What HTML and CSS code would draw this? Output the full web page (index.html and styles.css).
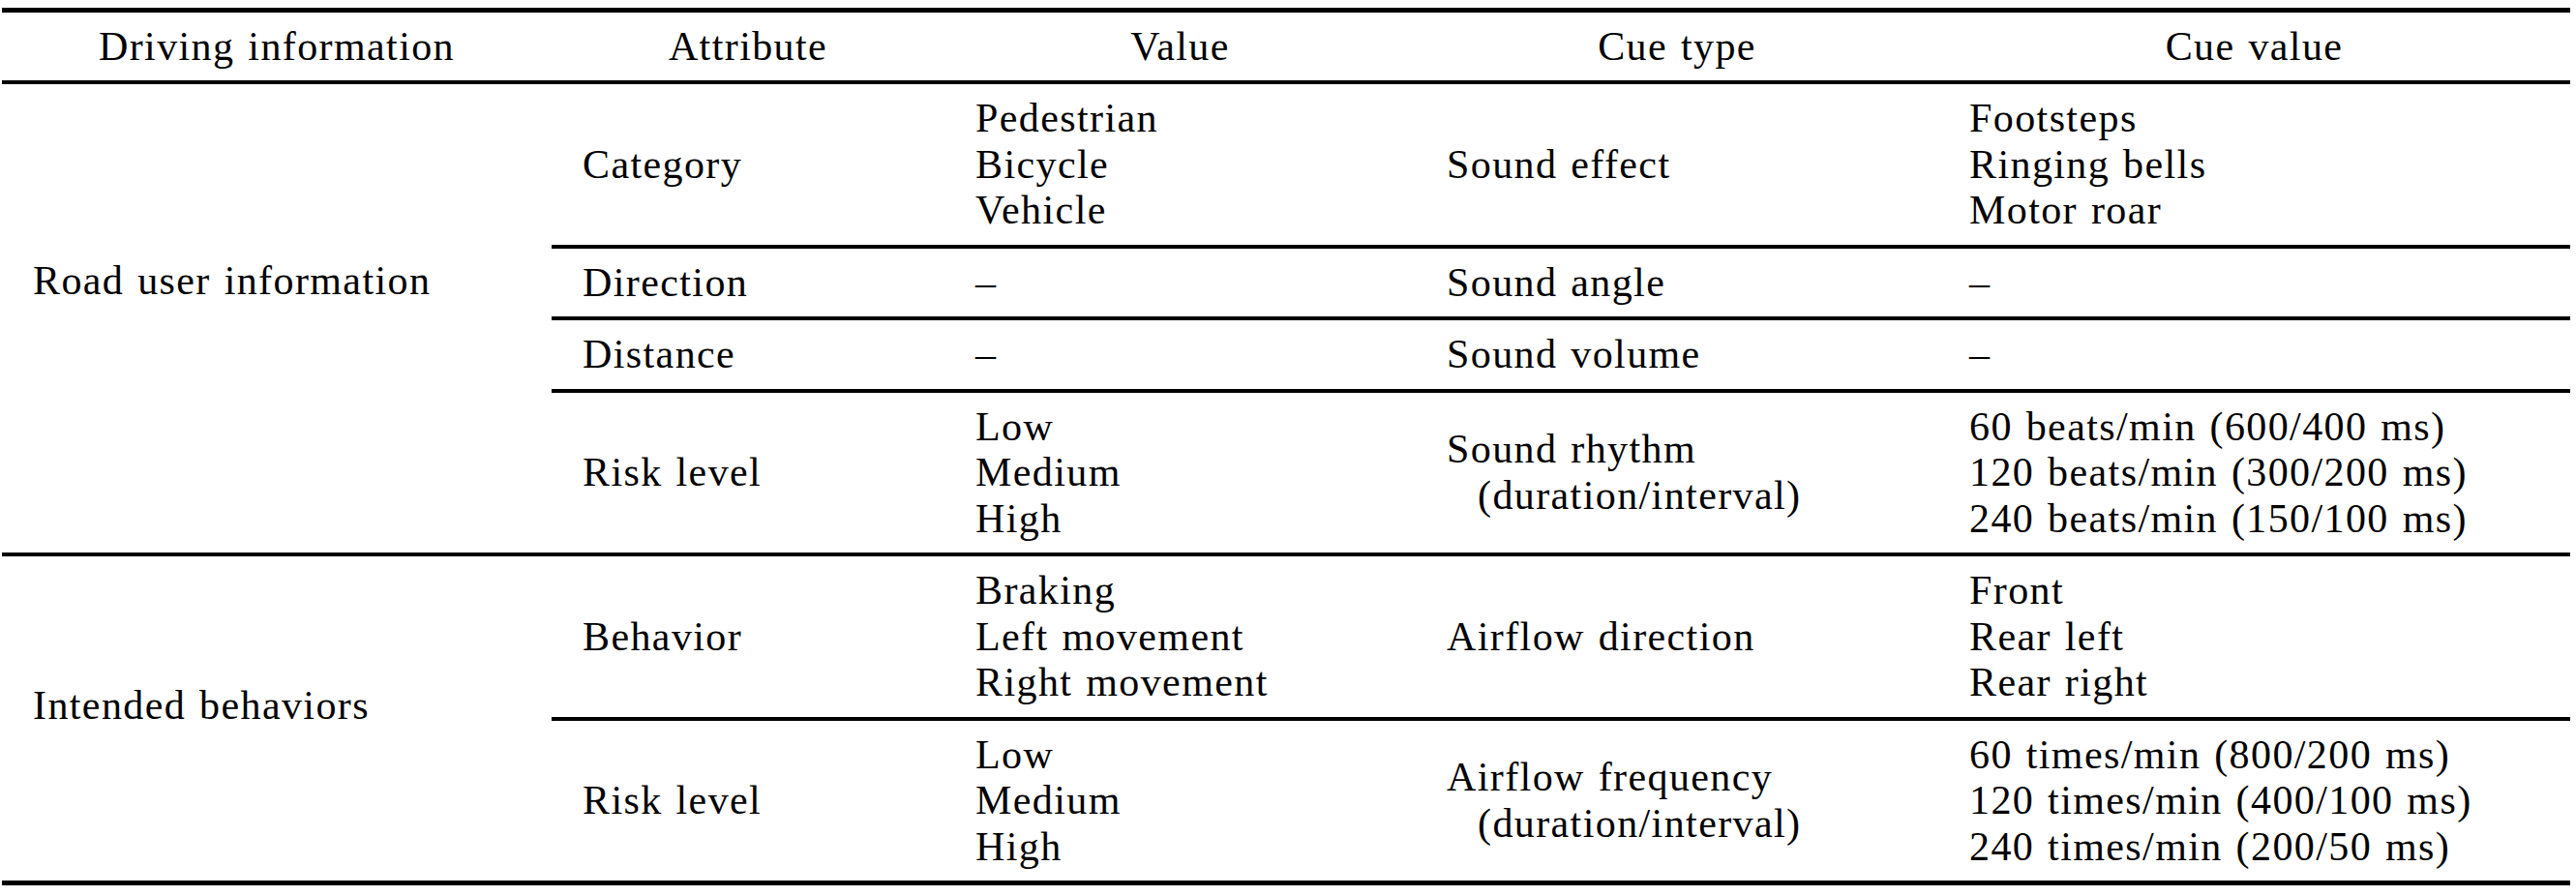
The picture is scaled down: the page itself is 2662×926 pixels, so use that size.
FILE: index.html
```html
<!DOCTYPE html>
<html lang="en">
<head>
<meta charset="utf-8">
<title>Cue mapping table</title>
<link rel="stylesheet" href="styles.css">
</head>
<body>
<table class="cues">
  <colgroup>
    <col class="col-info">
    <col class="col-attr">
    <col class="col-value">
    <col class="col-type">
    <col class="col-cue">
  </colgroup>
  <thead>
    <tr>
      <th>Driving information</th>
      <th>Attribute</th>
      <th>Value</th>
      <th>Cue type</th>
      <th>Cue value</th>
    </tr>
  </thead>
  <tbody>
    <tr>
      <td class="group group-road end" rowspan="4">Road user information</td>
      <td class="cl">Category</td>
      <td class="cl">Pedestrian<br>Bicycle<br>Vehicle</td>
      <td class="cl">Sound effect</td>
      <td class="cl">Footsteps<br>Ringing bells<br>Motor roar</td>
    </tr>
    <tr>
      <td class="cl">Direction</td>
      <td class="cl">–</td>
      <td class="cl">Sound angle</td>
      <td class="cl">–</td>
    </tr>
    <tr>
      <td class="cl">Distance</td>
      <td class="cl">–</td>
      <td class="cl">Sound volume</td>
      <td class="cl">–</td>
    </tr>
    <tr>
      <td class="end">Risk level</td>
      <td class="end">Low<br>Medium<br>High</td>
      <td class="end"><span class="line">Sound rhythm</span><span class="line indent">(duration/interval)</span></td>
      <td class="end">60 beats/min (600/400 ms)<br>120 beats/min (300/200 ms)<br>240 beats/min (150/100 ms)</td>
    </tr>
    <tr>
      <td class="group group-intent last" rowspan="2">Intended behaviors</td>
      <td class="cl">Behavior</td>
      <td class="cl">Braking<br>Left movement<br>Right movement</td>
      <td class="cl">Airflow direction</td>
      <td class="cl">Front<br>Rear left<br>Rear right</td>
    </tr>
    <tr>
      <td class="last">Risk level</td>
      <td class="last">Low<br>Medium<br>High</td>
      <td class="last"><span class="line">Airflow frequency</span><span class="line indent">(duration/interval)</span></td>
      <td class="last">60 times/min (800/200 ms)<br>120 times/min (400/100 ms)<br>240 times/min (200/50 ms)</td>
    </tr>
  </tbody>
</table>
</body>
</html>
```
FILE: styles.css
```css
html, body {
  margin: 0;
  padding: 0;
  background: #ffffff;
}

body {
  padding: 8px 0 0 2px;
  color: #000000;
  font-family: "Liberation Serif", "Times New Roman", serif;
  font-size: 42px;
  letter-spacing: 1.4px;
  word-spacing: 2px;
}

.cues {
  width: 2654px;
  table-layout: fixed;
  border-collapse: separate;
  border-spacing: 0;
  line-height: 47.5px;
}

.col-info { width: 568px; }
.col-attr { width: 406px; }
.col-value { width: 487px; }
.col-type { width: 540px; }
.col-cue { width: 653px; }

.cues th {
  font-weight: normal;
  text-align: center;
  vertical-align: middle;
  padding: 12px 32px 10.5px;
  border-top: 5px solid #000;
  border-bottom: 4px solid #000;
  white-space: nowrap;
}

.cues td {
  text-align: left;
  vertical-align: middle;
  padding: 12px 20px 11px 32px;
  white-space: nowrap;
}

.cues td.cl {
  border-bottom: 4px solid #000;
}

.cues td.end {
  border-bottom: 4px solid #000;
}

.cues td.last {
  border-bottom: 5px solid #000;
}

.cues td.group {
  vertical-align: top;
}

.cues td.group-road {
  padding-top: 180px;
}

.cues td.group-intent {
  padding-top: 131px;
}

.line {
  display: block;
}

.indent {
  padding-left: 32px;
}
```
